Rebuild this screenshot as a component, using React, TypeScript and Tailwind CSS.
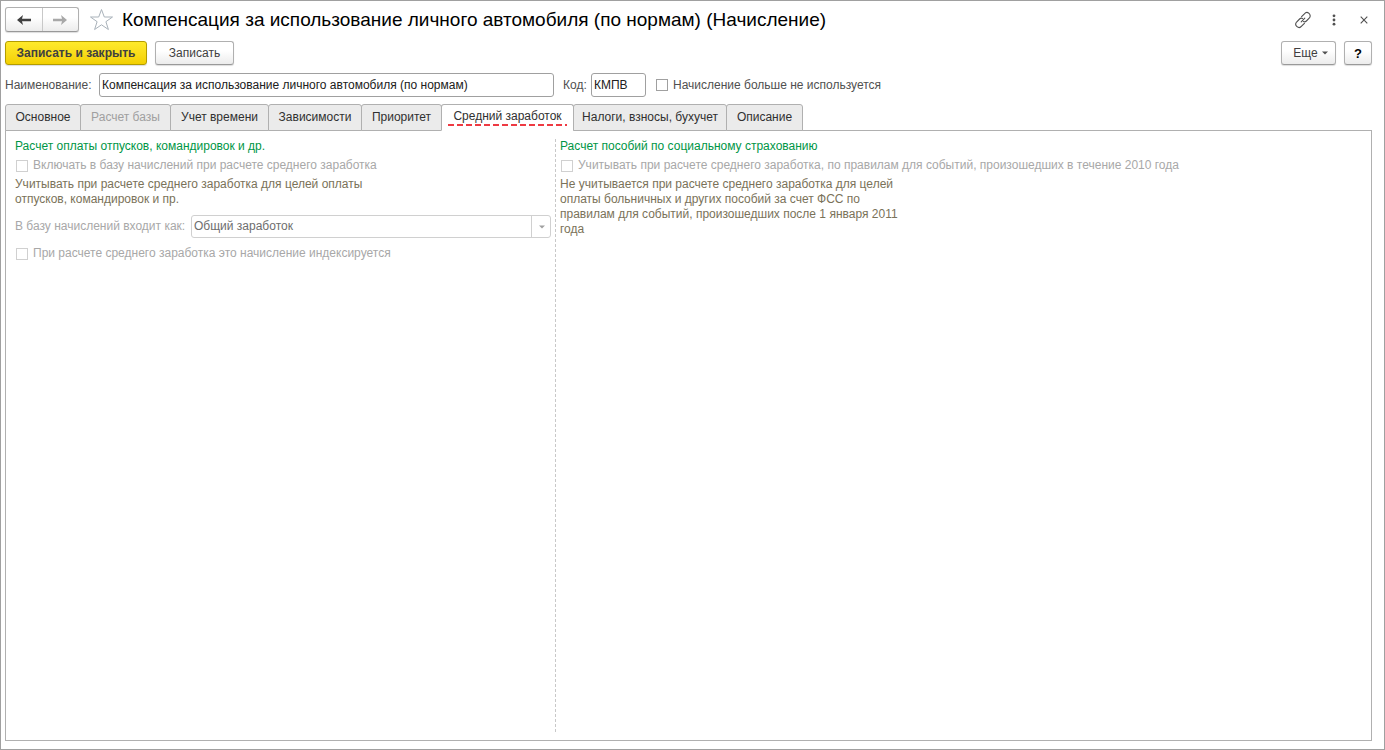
import React, { useState } from 'react'

const tabs = [
  { name: 'Основное', width: 'w-[76px]' },
  { name: 'Расчет базы', width: 'w-[91px]', disabled: true },
  { name: 'Учет времени', width: 'w-[99px]' },
  { name: 'Зависимости', width: 'w-[94px]' },
  { name: 'Приоритет', width: 'w-[81px]' },
  { name: 'Средний заработок', width: 'w-[133px]' },
  { name: 'Налоги, взносы, бухучет', width: 'w-[154px]' },
  { name: 'Описание', width: 'w-[77px]' },
]

const button = 'h-6 rounded-[3px] border border-[#b0b0b0] border-b-[#999] bg-linear-to-b from-white from-40% to-[#ececec] text-[#404040] shadow-[0_1px_1px_#ddd]'
const checkbox = 'h-3 w-3 shrink-0 appearance-none border bg-white checked:bg-[#777]'

const Arrow = ({ className }: { className: string }) => (
  <svg className={className} width="14" height="10" viewBox="0 0 14 10">
    <path d="M0 5 L6 0 L5 3.7 H14 V6.3 H5 L6 10 Z" fill="currentColor" />
  </svg>
)

const Header = () => (
  <header className="flex h-[25px] items-center">
    <div className="flex h-[25px] w-[74px] shrink-0 rounded-[3px] border border-[#b0b0b0] border-b-[#999] bg-linear-to-b from-white from-40% to-[#ececec] shadow-[0_1px_1px_#ddd]">
      <button aria-label="Назад" className="flex flex-1 items-center justify-center border-r border-[#c8c8c8]">
        <Arrow className="text-[#404040]" />
      </button>
      <button aria-label="Вперед" className="flex flex-1 items-center justify-center">
        <Arrow className="-scale-x-100 text-[#a8a8a8]" />
      </button>
    </div>
    <button aria-label="В избранное" className="ml-2.5 shrink-0">
      <svg width="25" height="23" viewBox="0 0 25 23" fill="none" stroke="#a9b2ba">
        <path d="M12.5 1.5 L15.3 9 H23.5 L16.9 13.7 L19.4 21.5 L12.5 16.8 L5.6 21.5 L8.1 13.7 L1.5 9 H9.7 Z" />
      </svg>
    </button>
    <h1 className="ml-2 flex-1 text-[19px] leading-6 text-black">Компенсация за использование личного автомобиля (по нормам) (Начисление)</h1>
    <button aria-label="Получить ссылку" className="shrink-0">
      <svg width="18" height="18" viewBox="0 0 18 18" fill="none" stroke="#505050" strokeWidth="1.1" strokeLinecap="round">
        <path d="M7.6 5.6 L10.4 2.8 A2.8 2.8 0 0 1 15.4 7 L12.4 10 A2.8 2.8 0 0 1 9.4 10.6" />
        <path d="M10.4 12.4 L7.6 15.2 A2.8 2.8 0 0 1 2.6 11 L5.6 8 A2.8 2.8 0 0 1 8.6 7.4" />
        <path d="M7.2 10.8 L10.8 7.2" />
      </svg>
    </button>
    <button aria-label="Меню" className="ml-5 shrink-0">
      <svg width="4" height="12" viewBox="0 0 4 12" fill="#505050">
        <circle cx="2" cy="1.8" r="1.4" />
        <circle cx="2" cy="6" r="1.4" />
        <circle cx="2" cy="10.2" r="1.4" />
      </svg>
    </button>
    <button aria-label="Закрыть" className="mr-1 ml-6 shrink-0">
      <svg width="8" height="8" viewBox="0 0 8 8" stroke="#505050" strokeWidth="1.1">
        <path d="M0.7 0.7 L7.3 7.3 M7.3 0.7 L0.7 7.3" />
      </svg>
    </button>
  </header>
)

const App = () => {
  const [active, setActive] = useState('Средний заработок')

  return (
    <div className="flex min-h-screen flex-col border border-[#a0a0a0] bg-white pt-1.5 pr-3 pb-2 pl-1 font-['Liberation_Sans',Arial,sans-serif] text-[12px] leading-[15px] text-[#303030]">
      <Header />

      <div className="mt-[9px] flex gap-2">
        <button className="h-6 w-[142px] rounded-[3px] border border-[#b39c00] bg-linear-to-b from-[#ffea2a] to-[#f3d000] font-bold text-[#404040] shadow-[0_1px_1px_#ddd]">Записать и закрыть</button>
        <button className={button + ' w-[79px]'}>Записать</button>
        <button className={button + ' ml-auto flex w-[55px] items-center justify-center gap-1 pl-1'}>
          Еще
          <svg width="6" height="4" viewBox="0 0 6 4" fill="#505050"><path d="M0 0.5 H6 L3 3.5 Z" /></svg>
        </button>
        <button className={button + ' w-7 text-[13px] font-bold text-black'}>?</button>
      </div>

      <div className="mt-2 flex items-center text-[#505050]">
        <label htmlFor="name" className="w-[90px]">Наименование:</label>
        <input id="name" className="ml-1 h-6 w-[455px] rounded-[3px] border border-[#a0a0a0] px-0.5 text-[#202020]" defaultValue="Компенсация за использование личного автомобиля (по нормам)" />
        <label htmlFor="code" className="ml-[9px] w-6">Код:</label>
        <input id="code" className="ml-1 h-6 w-[55px] rounded-[3px] border border-[#a0a0a0] px-0.5 text-[#202020]" defaultValue="КМПВ" />
        <input id="unused" type="checkbox" className={checkbox + ' ml-2.5 border-[#a0a0a0]'} />
        <label htmlFor="unused" className="ml-[5px]">Начисление больше не используется</label>
      </div>

      <div role="tablist" className="z-10 mt-[7px] -mb-px flex">
        {tabs.map((tab) => (
          <button
            key={tab.name}
            role="tab"
            aria-selected={tab.name === active}
            disabled={tab.disabled}
            onClick={() => setActive(tab.name)}
            className={
              tab.width + ' -mr-px h-[27px] shrink-0 rounded-t-[3px] border border-[#b0b0b0] whitespace-nowrap ' +
              (tab.name === active ? 'border-b-white bg-white px-1.5' : 'bg-[#ebebeb] disabled:text-[#a0a0a0]')
            }
          >
            {tab.name === active ? (
              <span className="flex flex-col">
                {tab.name}
                <svg className="h-0.5 w-full"><path d="M0 1 H400" stroke="#ee3a43" strokeWidth="2" strokeDasharray="6 3" /></svg>
              </span>
            ) : tab.name}
          </button>
        ))}
      </div>

      <main className="flex flex-1 border border-[#b0b0b0] py-2 pl-[9px]">
        <section className="w-[541px] shrink-0 border-r border-dashed border-[#c8c8c8] pr-1">
          <h2 className="text-[#009646]">Расчет оплаты отпусков, командировок и др.</h2>
          <div className="mt-1 flex items-center gap-[5px] pl-px text-[#a8a8a8]">
            <input id="base" type="checkbox" disabled className={checkbox + ' border-[#d0d0d0]'} />
            <label htmlFor="base">Включать в базу начислений при расчете среднего заработка</label>
          </div>
          <p className="mt-1 w-[370px] text-[#7a7259]">Учитывать при расчете среднего заработка для целей оплаты отпусков, командировок и пр.</p>
          <div className="mt-2 flex items-center text-[#a8a8a8]">
            <label htmlFor="kind" className="w-[172px]">В базу начислений входит как:</label>
            <div className="relative ml-1 flex-1">
              <select id="kind" disabled className="block h-[23px] w-full appearance-none rounded-[3px] border border-[#d0d0d0] bg-white px-0.5 text-[#6e6e6e] opacity-100">
                <option>Общий заработок</option>
              </select>
              <span className="pointer-events-none absolute inset-y-0 right-0 flex w-5 items-center justify-center border-l border-[#d0d0d0]">
                <svg width="6" height="4" viewBox="0 0 6 4" fill="#a0a0a0"><path d="M0 0.5 H6 L3 3.5 Z" /></svg>
              </span>
            </div>
          </div>
          <div className="mt-2 flex items-center gap-[5px] pl-px text-[#a8a8a8]">
            <input id="index" type="checkbox" disabled className={checkbox + ' border-[#d0d0d0]'} />
            <label htmlFor="index">При расчете среднего заработка это начисление индексируется</label>
          </div>
        </section>

        <section className="flex-1 pl-1">
          <h2 className="text-[#009646]">Расчет пособий по социальному страхованию</h2>
          <div className="mt-1 flex items-center gap-[5px] pl-px text-[#a8a8a8]">
            <input id="rules" type="checkbox" disabled className={checkbox + ' border-[#d0d0d0]'} />
            <label htmlFor="rules">Учитывать при расчете среднего заработка, по правилам для событий, произошедших в течение 2010 года</label>
          </div>
          <p className="mt-1 w-[350px] text-[#7a7259]">Не учитывается при расчете среднего заработка для целей оплаты больничных и других пособий за счет ФСС по правилам для событий, произошедших после 1 января 2011 года</p>
        </section>
      </main>
    </div>
  )
}

export default App
